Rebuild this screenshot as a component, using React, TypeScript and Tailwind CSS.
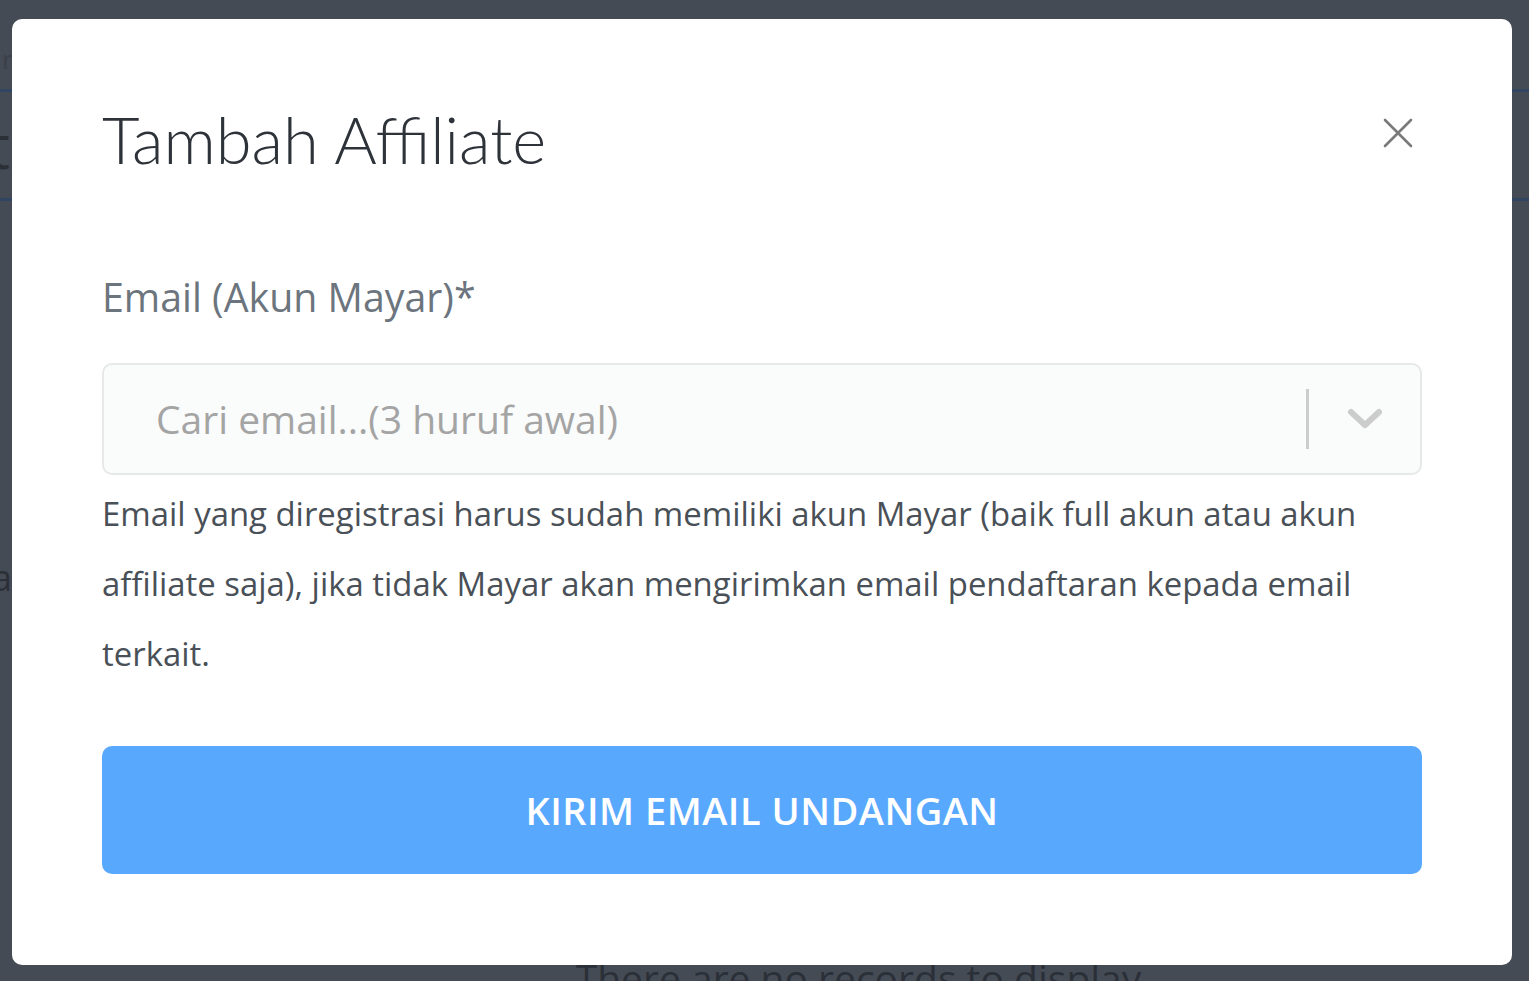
function PageBehind() {
  return (
    <div className="flex h-full w-full flex-col font-['Open_Sans',sans-serif] text-[#2b3038]">
      <div className="flex h-[92px] flex-col border-b-[3px] border-[#2f4562] pt-[44px]">
        <span className="pl-[2px] text-[26px] leading-[30px] text-[#3a4049]">r</span>
      </div>
      <div className="flex h-[109px] items-center border-b-[3px] border-[#2f4562]">
        <span className="-ml-[12px] text-[62px] leading-none">t</span>
      </div>
      <div className="flex h-[395px] items-end">
        <span className="-ml-[8px] text-[36px] leading-none">a</span>
      </div>
      <div className="mt-auto flex justify-center pl-[188px]">
        <span className="translate-y-[16px] text-[39px] leading-none">There are no records to display</span>
      </div>
    </div>
  );
}

function CloseIcon() {
  return (
    <svg width="30" height="30" viewBox="0 0 30 30" fill="none">
      <path d="M2 2 L28 28 M28 2 L2 28" stroke="#7a7a7a" strokeWidth="2.6" strokeLinecap="round" />
    </svg>
  );
}

function ChevronDown() {
  return (
    <svg width="40" height="28" viewBox="0 0 40 28" fill="none">
      <path d="M6 7 L20 20 L34 7" stroke="#cccccc" strokeWidth="6" strokeLinecap="round" strokeLinejoin="round" />
    </svg>
  );
}

function AddAffiliateModal() {
  return (
    <div className="flex h-[946px] w-[1500px] flex-col rounded-[10px] bg-white px-[90px] pt-[84px]">
      <div className="flex items-start justify-between">
        <h2 className="font-['Lato',sans-serif] text-[65px] font-light leading-[72px] text-[#2e333a]">
          Tambah Affiliate
        </h2>
        <button className="mr-[9px] mt-[15px]">
          <CloseIcon />
        </button>
      </div>

      <div className="mt-[97px] font-['Open_Sans',sans-serif]">
        <label className="block text-[39.3px] leading-[50px] text-[#6c757d]">Email (Akun Mayar)*</label>
        <div className="mt-[41px] flex h-[112px] items-center rounded-[10px] border-2 border-[#e6e8ea] bg-[#fafbfb]">
          <span className="flex-1 pl-[52px] text-[39px] text-[#a4a4a4]">Cari email...(3 huruf awal)</span>
          <span className="h-[60px] w-[3px] bg-[#cccccc]" />
          <span className="flex w-[111px] items-center justify-center">
            <ChevronDown />
          </span>
        </div>
        <p className="mt-[4px] text-[32.9px] leading-[70px] text-[#495057]">
          Email yang diregistrasi harus sudah memiliki akun Mayar (baik full akun atau akun affiliate saja), jika tidak
          Mayar akan mengirimkan email pendaftaran kepada email terkait.
        </p>
        <button className="mt-[57px] flex h-[128px] w-full items-center justify-center rounded-[10px] bg-[#58a8fd] text-[38px] font-semibold tracking-[0.5px] text-white">
          KIRIM EMAIL UNDANGAN
        </button>
      </div>
    </div>
  );
}

export default function App() {
  return (
    <div className="relative h-[981px] w-full overflow-hidden bg-[#454b55]">
      <PageBehind />
      <div className="absolute left-[12px] top-[19px]">
        <AddAffiliateModal />
      </div>
    </div>
  );
}
